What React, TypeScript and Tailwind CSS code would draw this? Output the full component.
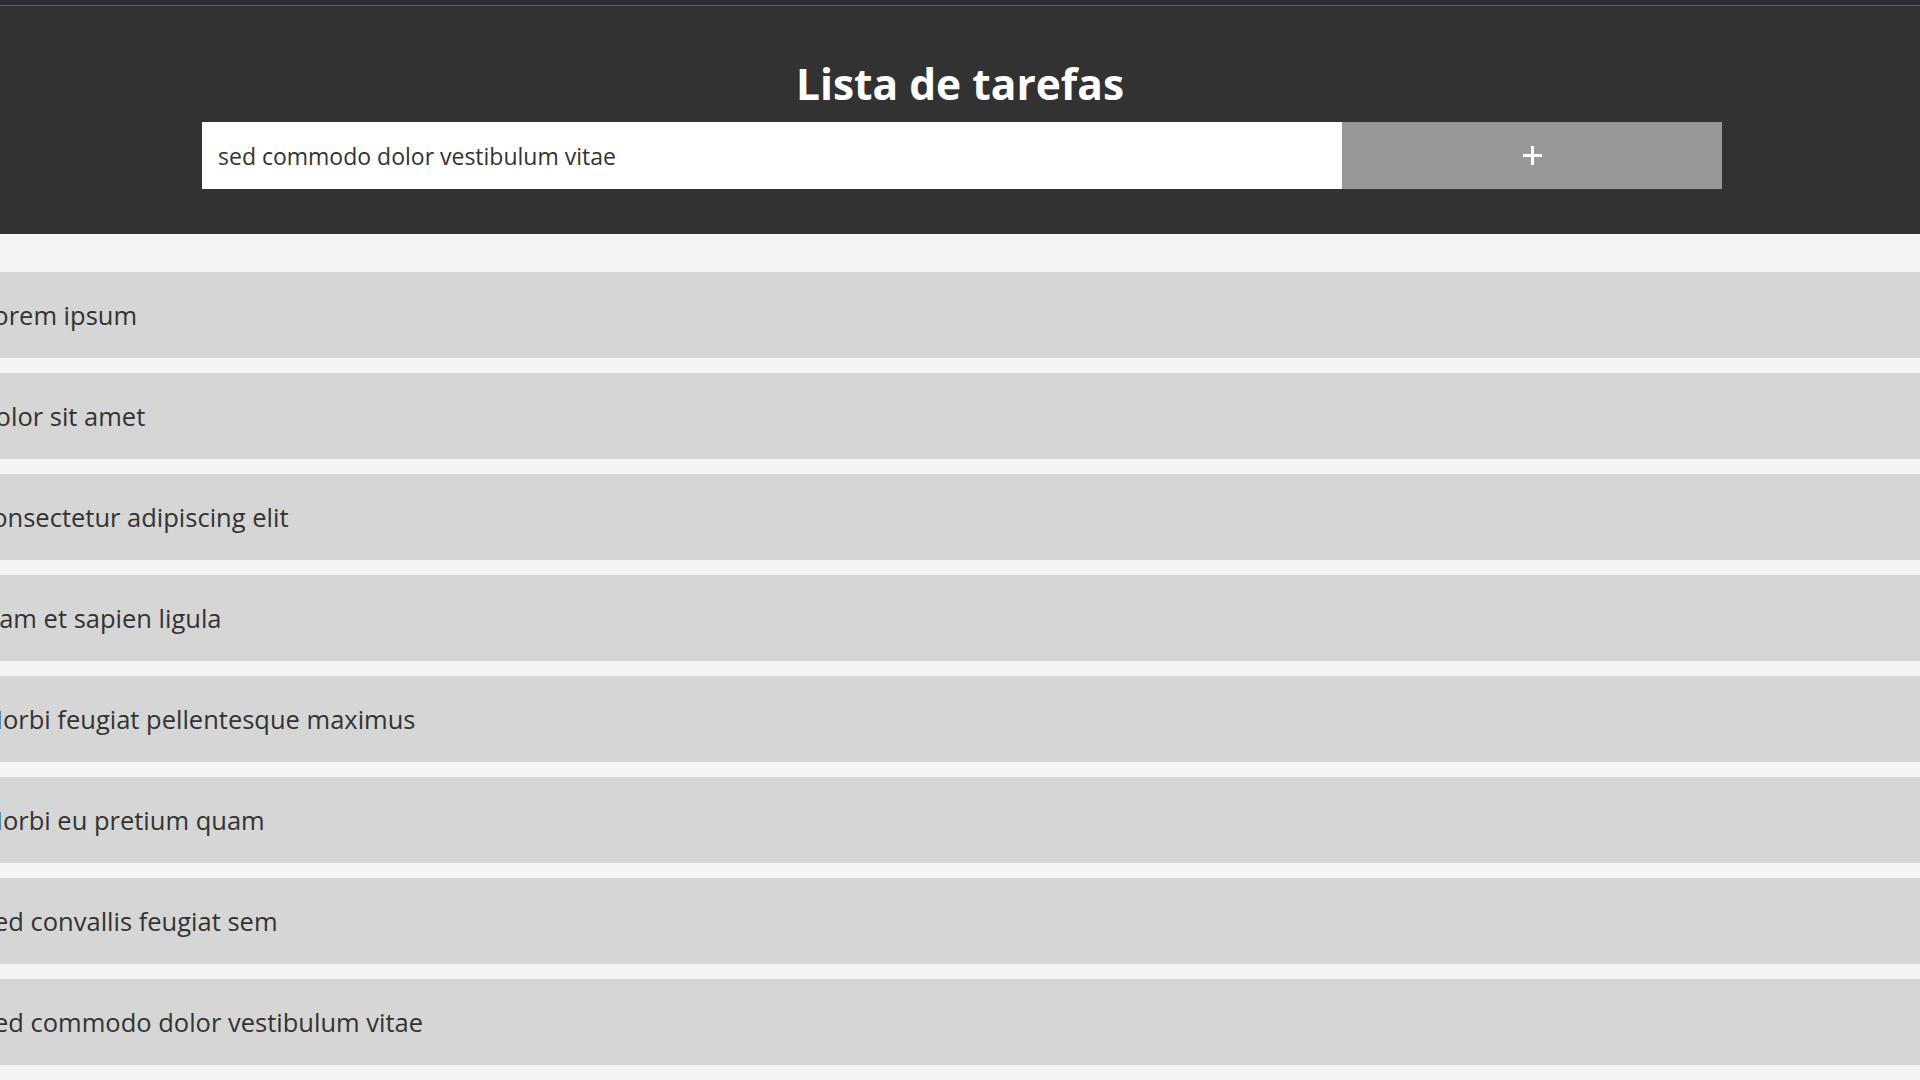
import React, { useState } from "react";

export default function App() {
  const [task, setTask] = useState("sed commodo dolor vestibulum vitae");

  // Tasks already in the list
  const tasks = [
    "Lorem ipsum",
    "dolor sit amet",
    "consectetur adipiscing elit",
    "Nam et sapien ligula",
    "Morbi feugiat pellentesque maximus",
    "Morbi eu pretium quam",
    "Sed convallis feugiat sem",
    "Sed commodo dolor vestibulum vitae",
  ];

  return (
    <div
      className="min-h-screen bg-[#f4f4f4] overflow-hidden"
      style={{ fontFamily: '"Open Sans", "Noto Sans", sans-serif' }}
    >
      {/* Top strip */}
      <div className="h-[6px] bg-[#2b2b2f] border-b border-[#5c5c5c]" />

      {/* Header */}
      <header className="bg-[#323232] pt-[53px] pb-[45px]">
        <h1 className="text-center text-white font-bold text-[42.5px] leading-[50px] mb-[13px]">
          Lista de tarefas
        </h1>
        <form
          className="ml-[202px] flex w-[1520px] h-[67px]"
          onSubmit={(e) => e.preventDefault()}
        >
          <input
            value={task}
            onChange={(e) => setTask(e.target.value)}
            className="w-[1140px] h-full bg-white px-4 text-[23px] text-[#333333] outline-none"
          />
          <button
            type="submit"
            className="flex-1 h-full bg-[#989898] flex items-center justify-center"
          >
            <svg width="21" height="21" viewBox="0 0 21 21" fill="none">
              <path d="M10.5 1v19M1 10.5h19" stroke="white" strokeWidth="3" />
            </svg>
          </button>
        </form>
      </header>

      {/* Task list */}
      <ul className="-ml-[20px] pt-[38px] flex flex-col gap-[15px]">
        {tasks.map((t, i) => (
          <li
            key={i}
            className="h-[86px] bg-[#d6d6d6] flex items-center text-[25.5px] text-[#333333]"
          >
            {t}
          </li>
        ))}
      </ul>
    </div>
  );
}
